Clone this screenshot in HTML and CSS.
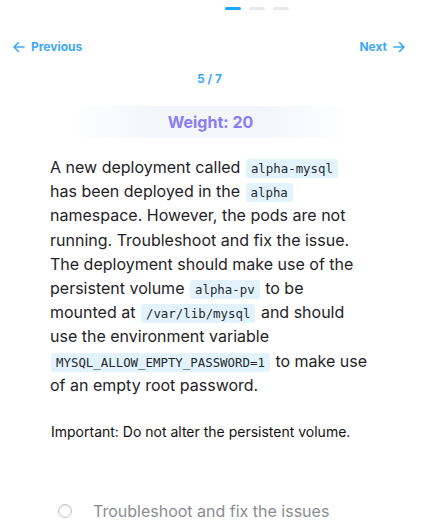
FILE: index.html
```html
<!DOCTYPE html>
<html>
<head>
<meta charset="utf-8">
<link rel="stylesheet" href="styles.css">
</head>
<body>
<div class="dots">
  <span class="dot active"></span>
  <span class="dot"></span>
  <span class="dot"></span>
</div>
<div class="nav">
  <a class="nav-btn">
    <svg width="12" height="12" viewBox="0 0 12 12" fill="none" stroke="currentColor" stroke-width="1.6" stroke-linecap="round" stroke-linejoin="round"><path d="M11 6H1.5M5.5 1.5L1 6l4.5 4.5"/></svg>
    <span>Previous</span>
  </a>
  <a class="nav-btn">
    <span>Next</span>
    <svg width="12" height="12" viewBox="0 0 12 12" fill="none" stroke="currentColor" stroke-width="1.6" stroke-linecap="round" stroke-linejoin="round"><path d="M1 6h9.5M6.5 1.5L11 6l-4.5 4.5"/></svg>
  </a>
</div>
<div class="counter">5 / 7</div>
<div class="weight">Weight: 20</div>
<div class="content">
  <p class="question">A new deployment called <code>alpha-mysql</code> has been deployed in the <code>alpha</code> namespace. However, the pods are not running. Troubleshoot and fix the issue. The deployment should make use of the persistent volume <code>alpha-pv</code> to be mounted at <code>/var/lib/mysql</code> and should use the environment variable <code>MYSQL_ALLOW_EMPTY_PASSWORD=1</code> to make use of an empty root password.</p>
  <p class="note">Important: Do not alter the persistent volume.</p>
  <label class="option"><span class="radio"></span><span class="option-text">Troubleshoot and fix the issues</span></label>
</div>
</body>
</html>
```
FILE: styles.css
```css
html, body {
  margin: 0;
  padding: 0;
  background: #ffffff;
}
body {
  font-family: Inter, "Noto Sans", sans-serif;
  color: #1f2328;
  width: 421px;
  height: 532px;
  overflow: hidden;
}
.dots {
  display: flex;
  gap: 8px;
  padding-top: 7px;
  margin-left: 225px;
}
.dot {
  width: 16px;
  height: 3px;
  border-radius: 2px;
  background: #e8e8e8;
}
.dot.active {
  background: #1da7f4;
}
.nav {
  display: flex;
  justify-content: space-between;
  padding: 0 16px 0 13px;
  margin-top: 29px;
}
.nav-btn {
  display: flex;
  align-items: center;
  gap: 6px;
  font-size: 12px;
  font-weight: 700;
  line-height: 16px;
  color: #3ea8f7;
}
.counter {
  text-align: center;
  font-size: 12px;
  font-weight: 700;
  line-height: 16px;
  color: #3ea8f7;
  margin-top: 16px;
  padding-right: 2px;
}
.weight {
  margin: 19px 70px 0 70px;
  height: 32px;
  line-height: 32px;
  text-align: center;
  font-size: 16px;
  font-weight: 700;
  color: #8b7cf8;
  background: linear-gradient(90deg, rgba(241,245,250,0) 0%, #f3f6fa 30%, #f3f6fa 70%, rgba(241,245,250,0) 100%);
}
.content {
  padding: 0 53px 0 50px;
}
.question {
  margin: 17px 0 0 0;
  font-size: 16px;
  line-height: 24.2px;
  color: #1f2328;
}
code {
  font-family: "DejaVu Sans Mono", monospace;
  font-size: 12.4px;
  line-height: 1;
  background: #e3f3fd;
  color: #24292f;
  padding: 2px 5px;
  border-radius: 3px;
  margin: 0 1px;
}
.note {
  margin: 25px 0 0 1px;
  font-size: 14px;
  line-height: 20px;
  color: #111;
}
.option {
  display: flex;
  align-items: center;
  gap: 21px;
  margin-top: 57px;
  padding-left: 8px;
}
.radio {
  width: 12px;
  height: 12px;
  border-radius: 50%;
  border: 1.5px solid #c4c4c4;
  background: #fff;
  box-shadow: inset 0 1px 2px rgba(0,0,0,0.12);
}
.option-text {
  font-size: 16px;
  line-height: 24px;
  color: #8a8d91;
}
```
